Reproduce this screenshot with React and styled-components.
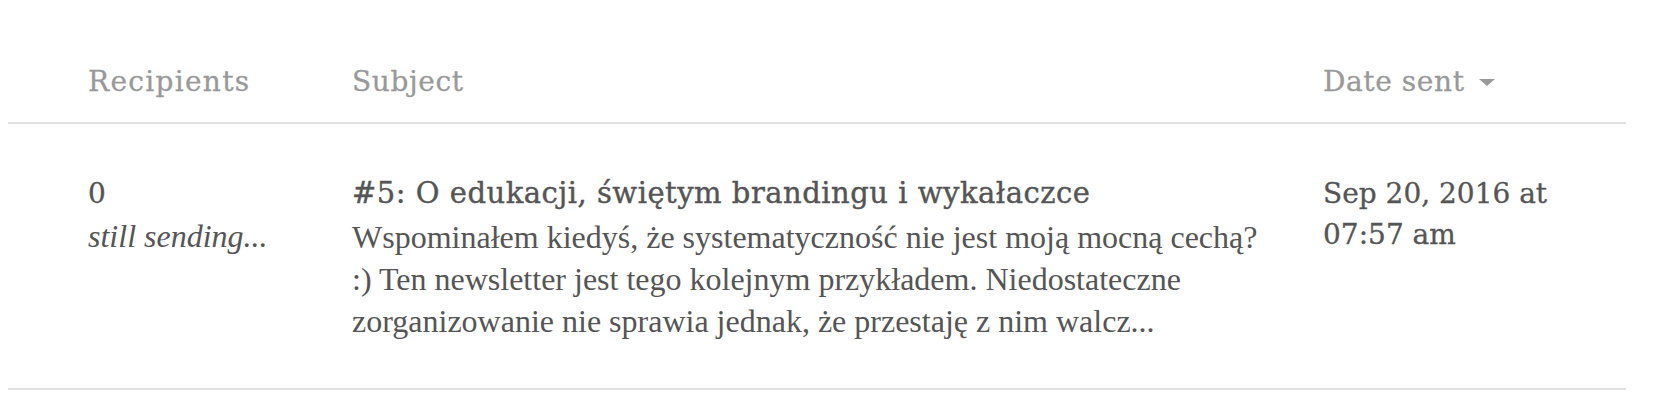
import React from 'react'
import styled, { createGlobalStyle } from 'styled-components'

const GlobalStyle = createGlobalStyle`
  body {
    margin: 8px;
    background: #fff;
    font-family: "Liberation Serif", serif;
  }
`

const campaigns = [
  {
    recipients: '0',
    status: 'still sending...',
    subject: '#5: O edukacji, świętym brandingu i wykałaczce',
    excerpt:
      'Wspominałem kiedyś, że systematyczność nie jest moją mocną cechą? :) Ten newsletter jest tego kolejnym przykładem. Niedostateczne zorganizowanie nie sprawia jednak, że przestaję z nim walcz...',
    date: 'Sep 20, 2016 at 07:57 am',
  },
]

const App = () => {
  return (
    <>
      <GlobalStyle />
      <Table>
        <HeadRow>
          <HeadCell $spacing={1.3}>Recipients</HeadCell>
          <HeadCell>Subject</HeadCell>
          <HeadCell>
            Date sent
            <SortArrow />
          </HeadCell>
        </HeadRow>
        {campaigns.map((c, i) => (
          <Row key={i}>
            <Cell>
              <Count>{c.recipients}</Count>
              <Status>{c.status}</Status>
            </Cell>
            <Cell $padRight={50}>
              <Subject>{c.subject}</Subject>
              <Excerpt>{c.excerpt}</Excerpt>
            </Cell>
            <Cell>
              <DateSent>{c.date}</DateSent>
            </Cell>
          </Row>
        ))}
      </Table>
    </>
  )
}

const Table = styled.div`
  width: 1618px;
`

const HeadRow = styled.div`
  display: grid;
  grid-template-columns: 264px 971px 1fr;
  padding: 54px 0 20px 80px;
  border-bottom: 2px solid #e0e0e0;
`

const HeadCell = styled.div`
  display: flex;
  align-items: center;
  font-family: "DejaVu Serif", serif;
  font-size: 28px;
  line-height: 40px;
  letter-spacing: ${(p) => p.$spacing ?? 0.6}px;
  color: #999;
  -webkit-text-stroke: 0.3px #999;
  white-space: pre;
`

const SortArrow = styled.span`
  display: inline-block;
  width: 0;
  height: 0;
  margin-left: 14px;
  border-left: 8px solid transparent;
  border-right: 8px solid transparent;
  border-top: 7px solid #999;
`

const Row = styled.div`
  display: grid;
  grid-template-columns: 264px 971px 1fr;
  padding: 49px 0 46px 80px;
  border-bottom: 2px solid #e0e0e0;
`

const Cell = styled.div`
  padding-right: ${(p) => p.$padRight || 0}px;
`

const Count = styled.div`
  font-family: "DejaVu Serif", serif;
  font-size: 28px;
  line-height: 41px;
  color: #555;
  -webkit-text-stroke: 0.3px #555;
`

const Status = styled.div`
  font-family: "Liberation Serif", serif;
  font-style: italic;
  font-size: 32px;
  line-height: 44px;
  color: #555;
`

const Subject = styled.div`
  font-family: "DejaVu Serif", serif;
  font-size: 29px;
  line-height: 41px;
  letter-spacing: 0.5px;
  color: #555;
  -webkit-text-stroke: 0.4px #555;
`

const Excerpt = styled.div`
  margin-top: 2px;
  font-family: "Liberation Serif", serif;
  font-size: 32px;
  line-height: 42px;
  color: #555;
`

const DateSent = styled.div`
  font-family: "DejaVu Serif", serif;
  font-size: 28px;
  line-height: 41px;
  color: #555;
  -webkit-text-stroke: 0.3px #555;
`

export default App
